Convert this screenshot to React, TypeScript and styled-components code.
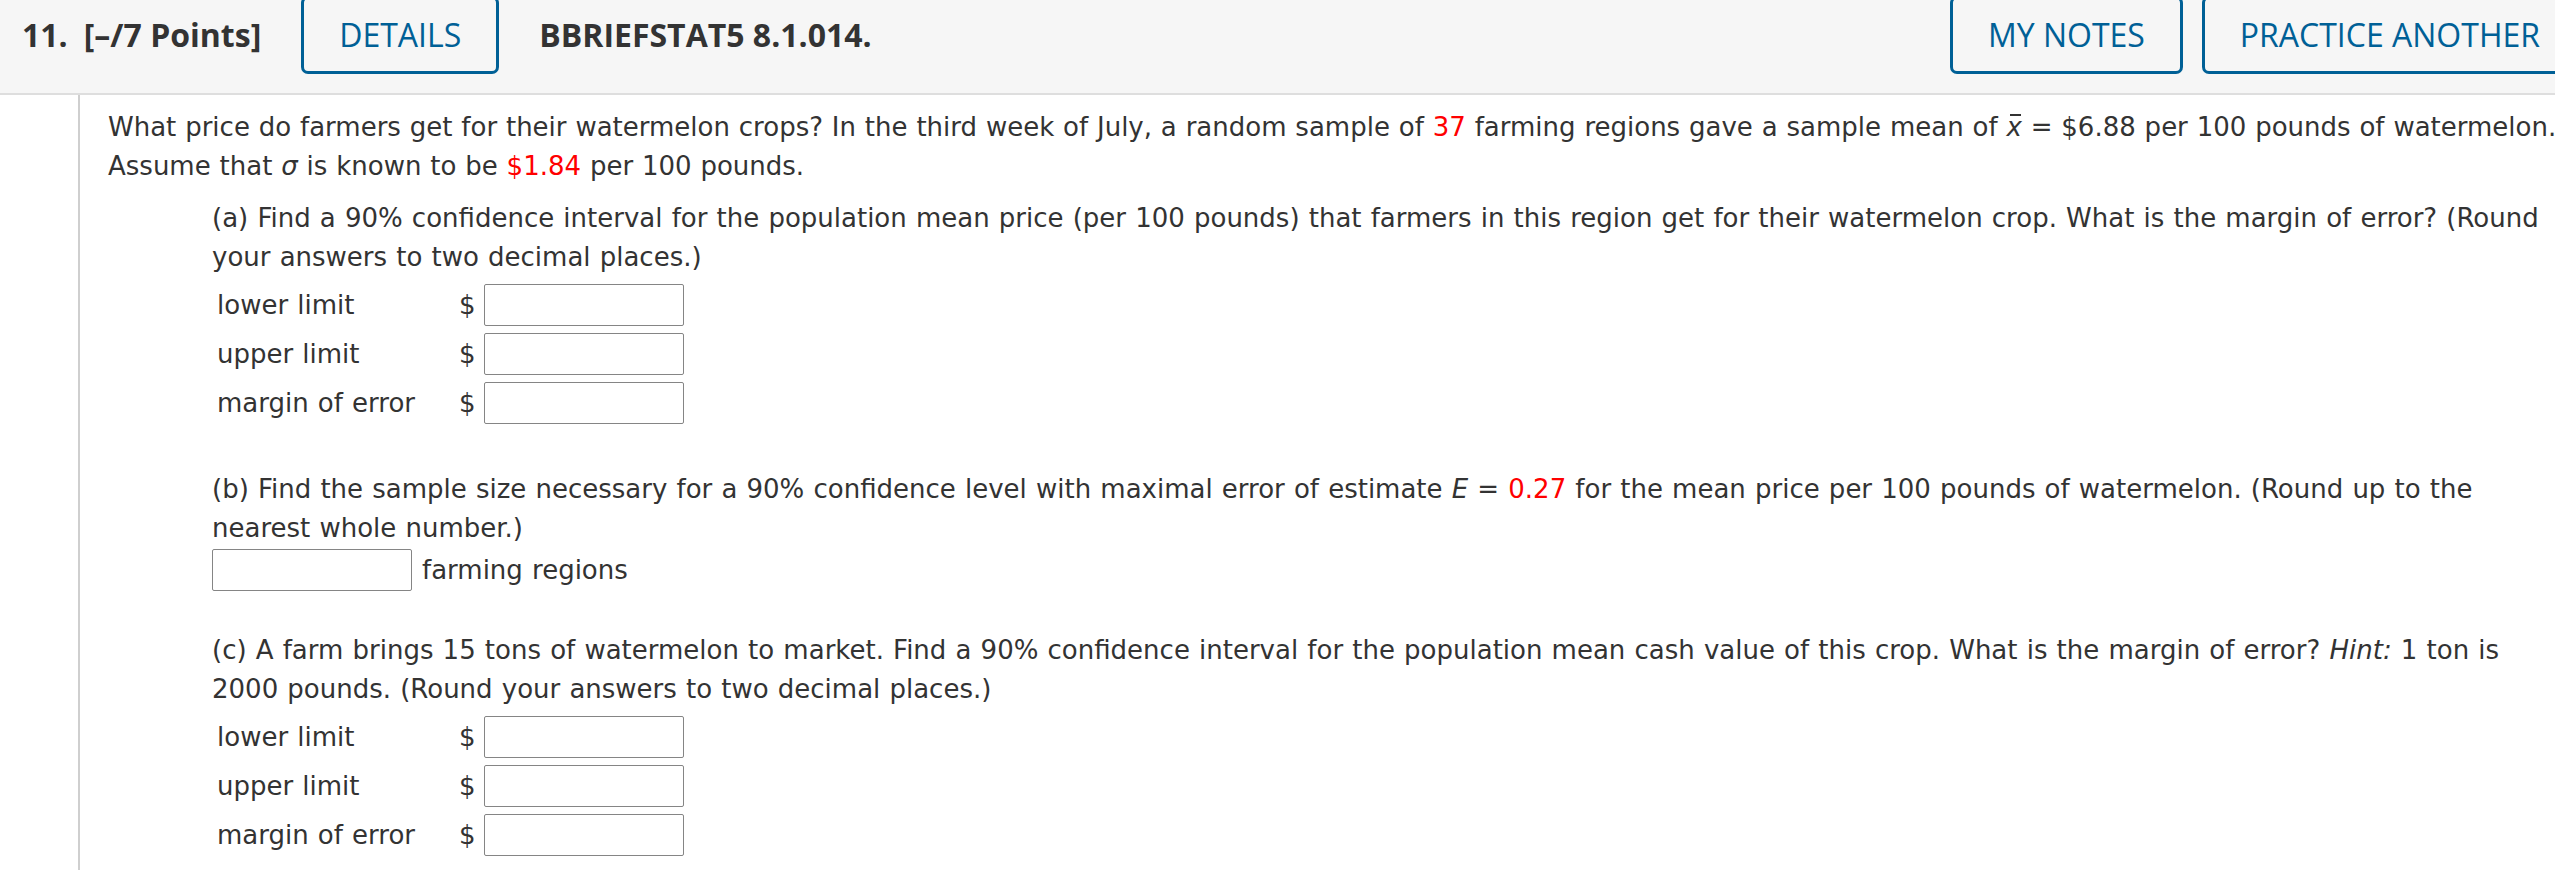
import React from "react";
import styled, { createGlobalStyle } from "styled-components";

const GlobalStyle = createGlobalStyle`
  html, body {
    margin: 0;
    padding: 0;
    background: #ffffff;
    overflow: hidden;
  }
  body {
    width: 2555px;
    height: 870px;
  }
`;

const Page = styled.div`
  width: 2600px;
  font-family: Verdana, "DejaVu Sans", sans-serif;
  color: #333333;
`;

const Header = styled.header`
  display: flex;
  align-items: center;
  box-sizing: border-box;
  height: 95px;
  padding: 0 22px 24px 22px;
  background: #f6f6f6;
  border-bottom: 2px solid #dedede;
  font-family: "Open Sans", sans-serif;
  font-size: 32px;
  white-space: nowrap;
`;

const Title = styled.span`
  font-weight: 700;
  color: #333333;
`;

const Number = styled(Title)`
  margin-right: 16px;
`;

const Code = styled(Title)`
  margin-left: 40px;
`;

const OutlineButton = styled.button<{ $ml?: number }>`
  box-sizing: border-box;
  height: 78px;
  margin-left: ${(p) => p.$ml ?? 0}px;
  padding: 0 35px;
  border: 3px solid #006096;
  border-radius: 7px;
  background: transparent;
  color: #006096;
  font-family: "Open Sans", sans-serif;
  font-size: 32px;
  font-weight: 400;
  white-space: nowrap;
  flex: none;
`;

const Spacer = styled.div`
  flex: 1;
`;

const Main = styled.div`
  display: flex;
  min-height: 775px;
`;

const Gutter = styled.div`
  flex: none;
  width: 78px;
  border-right: 2px solid #cfcfcf;
`;

const Content = styled.div`
  padding: 13px 0 0 28px;
  font-size: 26px;
  line-height: 39px;
  word-spacing: 0.9px;
  white-space: nowrap;
`;

const Paragraph = styled.div<{ $mt?: number }>`
  margin-top: ${(p) => p.$mt ?? 0}px;
  word-spacing: 0.6px;
`;

const Part = styled.div<{ $mt: number }>`
  margin-top: ${(p) => p.$mt}px;
  padding-left: 104px;
`;

const Red = styled.span`
  color: #ff0000;
`;

const Var = styled.i`
  font-style: italic;
`;

const XBar = styled.span`
  position: relative;
  font-style: italic;
  &::before {
    content: "";
    position: absolute;
    left: 4px;
    top: 2px;
    width: 11px;
    height: 2px;
    background: #333333;
  }
`;

const AnswerTable = styled.div`
  display: flex;
  flex-direction: column;
  gap: 7px;
  margin-top: 7px;
`;

const AnswerRow = styled.div`
  display: grid;
  grid-template-columns: 246px 26px 200px;
  align-items: center;
`;

const Label = styled.span`
  padding-left: 5px;
`;

const Dollar = styled.span`
  padding-left: 1px;
`;

const Box = styled.input`
  box-sizing: border-box;
  width: 200px;
  height: 42px;
  margin: 0;
  padding: 0 6px;
  border: 1px solid #858585;
  border-radius: 2px;
  background: #ffffff;
  font-family: inherit;
  font-size: 26px;
`;

const InlineRow = styled.div`
  display: flex;
  align-items: center;
  margin-top: 1px;
  gap: 10px;
`;

const rows = ["lower limit", "upper limit", "margin of error"];

function Answers() {
  return (
    <AnswerTable>
      {rows.map((r) => (
        <AnswerRow key={r}>
          <Label>{r}</Label>
          <Dollar>$</Dollar>
          <Box type="text" aria-label={r} />
        </AnswerRow>
      ))}
    </AnswerTable>
  );
}

export default function App() {
  return (
    <Page>
      <GlobalStyle />
      <Header>
        <Number>11.</Number>
        <Title>[–/7 Points]</Title>
        <OutlineButton $ml={40}>DETAILS</OutlineButton>
        <Code>BBRIEFSTAT5 8.1.014.</Code>
        <Spacer />
        <OutlineButton>MY NOTES</OutlineButton>
        <OutlineButton $ml={19}>PRACTICE ANOTHER</OutlineButton>
      </Header>
      <Main>
        <Gutter />
        <Content>
          <Paragraph>
            What price do farmers get for their watermelon crops? In the third
            week of July, a random sample of <Red>37</Red> farming regions gave
            a sample mean of <XBar>x</XBar> = $6.88 per 100 pounds of
            watermelon.
            <br />
            Assume that <Var>σ</Var> is known to be <Red>$1.84</Red> per 100
            pounds.
          </Paragraph>
          <Part $mt={13}>
            (a) Find a 90% confidence interval for the population mean price
            (per 100 pounds) that farmers in this region get for their
            watermelon crop. What is the margin of error? (Round
            <br />
            your answers to two decimal places.)
            <Answers />
          </Part>
          <Part $mt={46}>
            (b) Find the sample size necessary for a 90% confidence level with
            maximal error of estimate <Var>E</Var> = <Red>0.27</Red> for the
            mean price per 100 pounds of watermelon. (Round up to the
            <br />
            nearest whole number.)
            <InlineRow>
              <Box type="text" aria-label="sample size" />
              <span>farming regions</span>
            </InlineRow>
          </Part>
          <Part $mt={40}>
            (c) A farm brings 15 tons of watermelon to market. Find a 90%
            confidence interval for the population mean cash value of this
            crop. What is the margin of error? <Var>Hint:</Var> 1 ton is
            <br />
            2000 pounds. (Round your answers to two decimal places.)
            <Answers />
          </Part>
        </Content>
      </Main>
    </Page>
  );
}
